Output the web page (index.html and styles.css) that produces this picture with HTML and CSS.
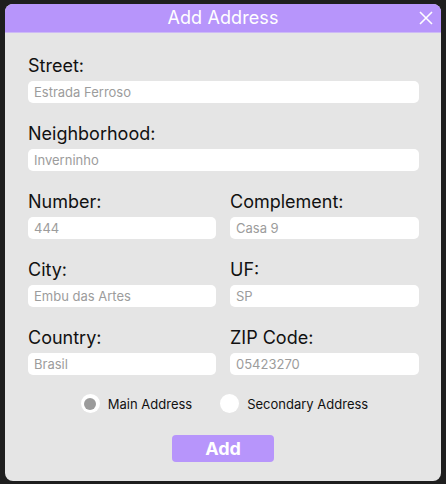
FILE: index.html
```html
<!DOCTYPE html>
<html>
<head>
<meta charset="utf-8">
<link rel="stylesheet" href="styles.css">
</head>
<body>
<div class="modal">
  <div class="header">
    <span class="title">Add Address</span>
    <svg class="close" width="14" height="14" viewBox="0 0 14 14"><path d="M1 1 L13 13 M13 1 L1 13" stroke="#fff" stroke-width="1.6" fill="none"/></svg>
  </div>
  <div class="content">
    <div class="field">
      <label class="label">Street:</label>
      <div class="input">Estrada Ferroso</div>
    </div>
    <div class="field">
      <label class="label">Neighborhood:</label>
      <div class="input">Inverninho</div>
    </div>
    <div class="grid">
      <div class="field"><label class="label">Number:</label><div class="input">444</div></div>
      <div class="field"><label class="label">Complement:</label><div class="input">Casa 9</div></div>
      <div class="field"><label class="label">City:</label><div class="input">Embu das Artes</div></div>
      <div class="field"><label class="label">UF:</label><div class="input">SP</div></div>
      <div class="field"><label class="label">Country:</label><div class="input">Brasil</div></div>
      <div class="field"><label class="label">ZIP Code:</label><div class="input">05423270</div></div>
    </div>
    <div class="radios">
      <div class="radio-item"><span class="radio checked"></span><span class="radio-label">Main Address</span></div>
      <div class="radio-item"><span class="radio"></span><span class="radio-label">Secondary Address</span></div>
    </div>
    <div class="actions">
      <button class="btn">Add</button>
    </div>
  </div>
</div>
</body>
</html>
```

FILE: styles.css
```css
html, body {
  margin: 0;
  padding: 0;
  background: #1e1e1e;
  font-family: Inter, "Noto Sans", sans-serif;
}
body {
  padding: 4px 5px 3px 5px;
}
.modal {
  width: 436px;
  height: 477px;
  background: #e5e5e5;
  border-radius: 8px;
  overflow: hidden;
  display: flex;
  flex-direction: column;
}
.header {
  position: relative;
  height: 28px;
  background: #b795fb;
  border-bottom: 1px solid #cdbaf6;
  display: flex;
  align-items: center;
  justify-content: center;
}
.title {
  color: #fff;
  font-size: 18px;
  line-height: 28px;
  letter-spacing: 0.1px;
}
.close {
  position: absolute;
  right: 8px;
  top: 7px;
}
.content {
  padding: 22px 22px 0 23px;
  display: flex;
  flex-direction: column;
}
.field {
  display: flex;
  flex-direction: column;
  gap: 5px;
  margin-bottom: 20px;
}
.label {
  font-size: 18px;
  line-height: 20px;
  padding-top: 1px;
  color: #111;
}
.input {
  height: 22px;
  background: #fff;
  border-radius: 5px;
  font-size: 13px;
  line-height: 22px;
  color: #9c9c9c;
  padding-left: 6px;
}
.grid {
  display: grid;
  grid-template-columns: 188px 189px;
  column-gap: 14px;
}
.radios {
  display: flex;
  justify-content: center;
  gap: 28px;
  margin-top: -1px;
  padding-left: 2px;
}
.radio-item {
  display: flex;
  align-items: center;
  gap: 8px;
}
.radio {
  width: 19px;
  height: 19px;
  border-radius: 50%;
  background: #fff;
  box-sizing: border-box;
  display: flex;
  align-items: center;
  justify-content: center;
}
.radio.checked::after {
  content: "";
  width: 12px;
  height: 12px;
  border-radius: 50%;
  background: #9b9b9b;
}
.radio-label {
  font-size: 13px;
  color: #111;
}
.actions {
  display: flex;
  justify-content: center;
  margin-top: 22px;
  padding-right: 1px;
}
.btn {
  width: 102px;
  height: 27px;
  border: none;
  border-radius: 4px;
  background: #b795fb;
  color: #fff;
  font-family: Inter, sans-serif;
  font-weight: 700;
  font-size: 18px;
  padding: 0;
}
```
